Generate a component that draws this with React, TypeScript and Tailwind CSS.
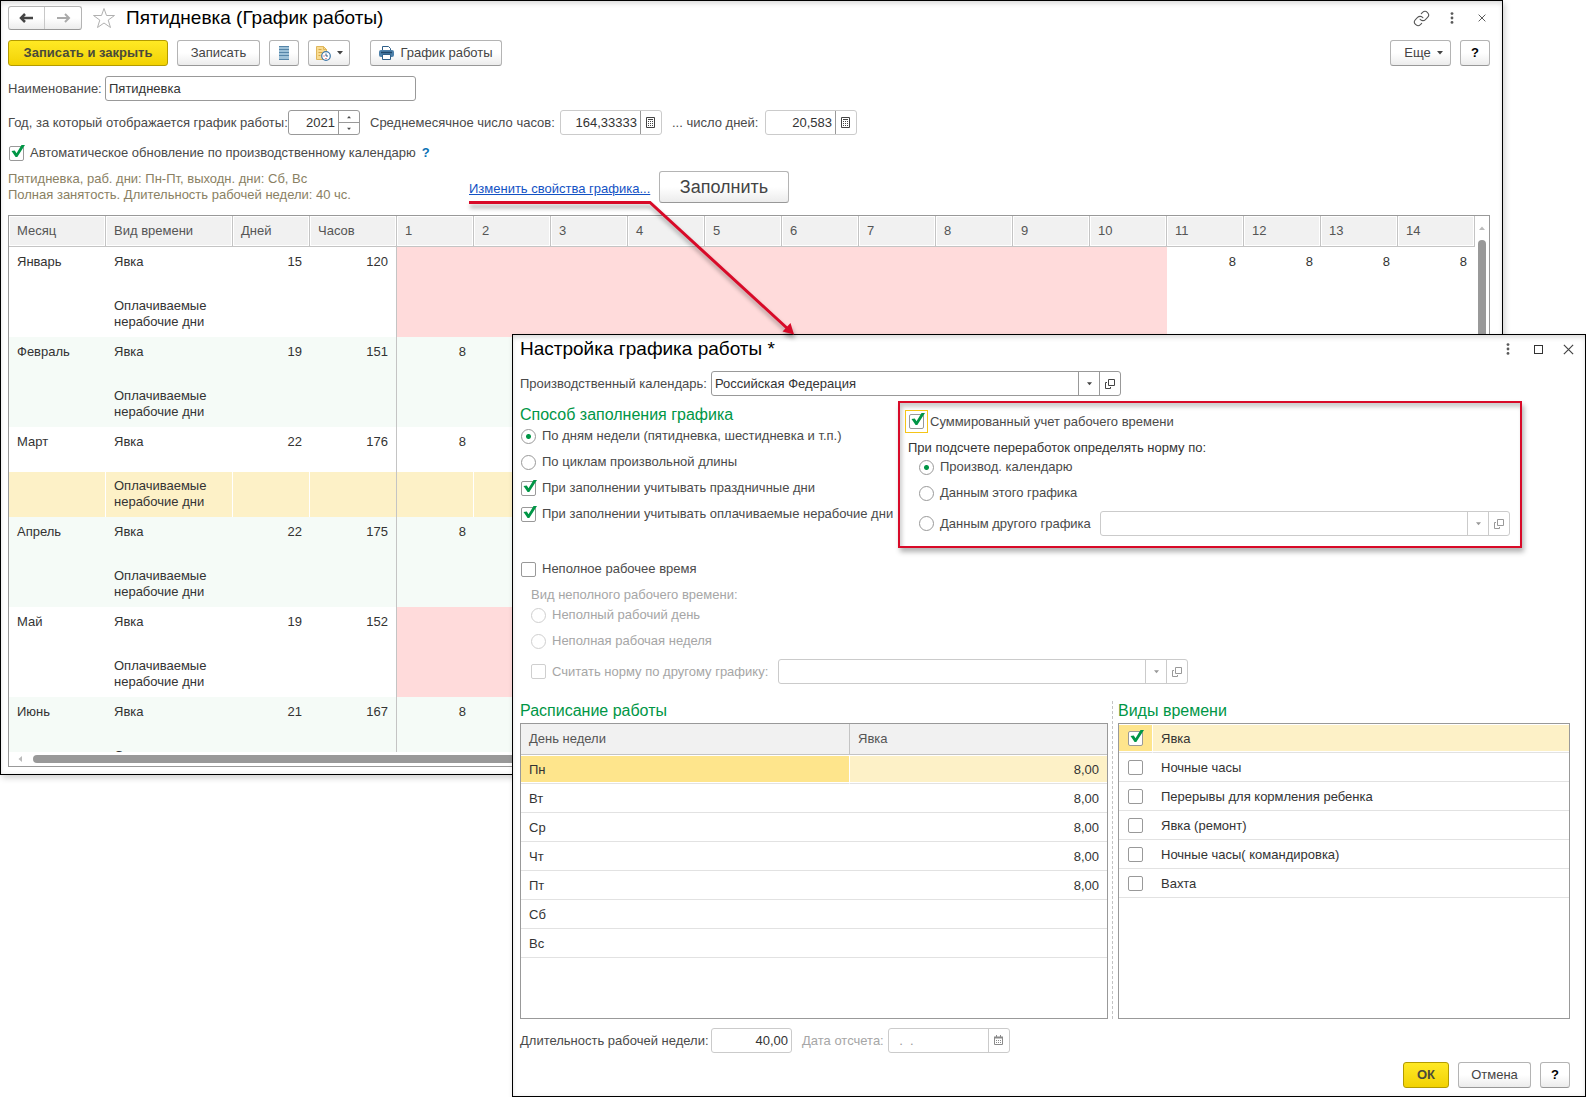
import React, { useState } from 'react';
import clsx from 'clsx';
import { Link } from 'lucide-react';

const days = [1, 2, 3, 4, 5, 6, 7, 8, 9, 10, 11, 12, 13, 14];

const months = [
  { name: 'Январь', days: 15, hours: 120, holidays: 10, values: { 11: 8, 12: 8, 13: 8, 14: 8 } },
  { name: 'Февраль', days: 19, hours: 151, holidays: 0, values: { 1: 8 } },
  { name: 'Март', days: 22, hours: 176, holidays: 0, values: { 1: 8 } },
  { name: 'Апрель', days: 22, hours: 175, holidays: 0, values: { 1: 8 } },
  { name: 'Май', days: 19, hours: 152, holidays: 3, values: {} },
  { name: 'Июнь', days: 21, hours: 167, holidays: 0, values: { 1: 8 } },
] as { name: string; days: number; hours: number; holidays: number; values: Record<number, number> }[];

const week = [
  { day: 'Пн', hours: '8,00' },
  { day: 'Вт', hours: '8,00' },
  { day: 'Ср', hours: '8,00' },
  { day: 'Чт', hours: '8,00' },
  { day: 'Пт', hours: '8,00' },
  { day: 'Сб', hours: '' },
  { day: 'Вс', hours: '' },
];

const timeKinds = [
  'Явка',
  'Ночные часы',
  'Перерывы для кормления ребенка',
  'Явка (ремонт)',
  'Ночные часы( командировка)',
  'Вахта',
];

/* Icons */

const Caret = ({ className }: { className?: string }) => (
  <svg width="6" height="4" viewBox="0 0 6 4" className={clsx('shrink-0', className)}>
    <path d="M0 0h6L3 3.5z" fill="currentColor" />
  </svg>
);

const OpenIcon = () => (
  <svg width="10" height="10" viewBox="0 0 10 10" fill="none" stroke="currentColor">
    <path d="M3.5 0.5h6v6h-6z" />
    <path d="M2 3.5H0.5v6h5V8" />
  </svg>
);

const CalcIcon = () => (
  <svg width="10" height="12" viewBox="0 0 10 12" fill="none" stroke="#444">
    <path d="M0.5 0.5h8v10h-8z" />
    <path d="M2 2.5h5" />
    <path d="M2 4.5h5M2 6.5h5M2 8.5h5" strokeDasharray="1 1" />
  </svg>
);

const CalendarIcon = () => (
  <svg width="10" height="11" viewBox="0 0 10 11" fill="none" stroke="#8a8a8a">
    <path d="M0.5 2.5h8v7h-8z" />
    <path d="M0 2.5h9" strokeWidth="2" />
    <path d="M2.5 0v2M6.5 0v2" />
    <path d="M2 5.5h5M2 7.5h5" strokeDasharray="1 1" />
  </svg>
);

const DotsIcon = () => (
  <svg width="4" height="12" viewBox="0 0 4 12" fill="#5a5a5a">
    <circle cx="2" cy="1.6" r="1.4" />
    <circle cx="2" cy="6" r="1.4" />
    <circle cx="2" cy="10.4" r="1.4" />
  </svg>
);

const CloseIcon = ({ size }: { size: number }) => (
  <svg width={size} height={size} viewBox="0 0 10 10" stroke="#444" strokeWidth="1.1">
    <path d="M0.8 0.8l8.4 8.4M9.2 0.8L0.8 9.2" />
  </svg>
);

const StarIcon = () => (
  <svg width="24" height="22" viewBox="0 0 24 22" fill="none" stroke="#b0b0b0">
    <path d="M12 1.5l2.5 7h8l-6.3 4.600 2.300 7.400L12 16l-6.500 4.500 2.300-7.400L1.500 8.500h8z" />
  </svg>
);

const ArrowLeft = () => (
  <svg width="15" height="10" viewBox="0 0 15 10" fill="none" stroke="#444" strokeWidth="2.5">
    <path d="M2 5H14" />
    <path d="M6 1L2 5l4 4" />
  </svg>
);

const ArrowRight = () => (
  <svg width="15" height="10" viewBox="0 0 15 10" fill="none" stroke="#aaa" strokeWidth="2">
    <path d="M13 5H1" />
    <path d="M9 1l4 4-4 4" />
  </svg>
);

const ListIcon = () => (
  <svg width="10" height="14" viewBox="0 0 10 14">
    <path d="M0 0h10v14H0z" fill="#9dc1d8" />
    <path d="M0 0.5h10M0 3.5h10M0 6.5h10M0 9.5h10M0 13.5h10" stroke="#5585a8" />
  </svg>
);

const ScheduleIcon = () => (
  <svg width="16" height="16" viewBox="0 0 16 16" fill="none">
    <path d="M1.500 1.500h7l3 3v10h-10z" fill="#f9dc91" stroke="#dfb65c" />
    <path d="M8.500 1.500v3h3" stroke="#dfb65c" />
    <path d="M3.500 4.500h3M3.500 7.500h4M3.500 10.500h2" stroke="#d9a846" />
    <circle cx="11" cy="11" r="4.300" fill="#fff" stroke="#3f78a8" strokeWidth="1.200" />
    <path d="M11 8.500V11h2" stroke="#2f5f88" />
    <path d="M8.500 11h1M10.500 13.500h1" stroke="#d2232a" />
  </svg>
);

const PrintIcon = () => (
  <svg width="15" height="14" viewBox="0 0 15 14">
    <path d="M3.500 5V0.500h6l2 2V5" fill="#fff" stroke="#2f5f88" />
    <rect x="0" y="4" width="15" height="7" rx="2" fill="#4c80aa" />
    <path d="M2 6.500h11" stroke="#1f4669" strokeWidth="1.500" />
    <path d="M3.500 8.500h8v5h-8z" fill="#fff" stroke="#2f5f88" />
  </svg>
);

/* Controls */

type ButtonProps = React.ButtonHTMLAttributes<HTMLButtonElement> & { primary?: boolean };

const Button = ({ primary, className, ...props }: ButtonProps) => (
  <button
    type="button"
    className={clsx(
      'flex shrink-0 items-center justify-center whitespace-nowrap rounded-[3px] border',
      primary
        ? 'border-[#b39b00] bg-linear-to-b from-[#ffe923] to-[#f2d200] font-bold text-[#4a4a3a]'
        : 'border-[#b4b4b4] border-b-[#989898] bg-linear-to-b from-white from-50% to-[#ececec] text-[#444]',
      className,
    )}
    {...props}
  />
);

type CheckProps = { label?: string; title?: string; defaultChecked?: boolean; disabled?: boolean; focused?: boolean };

const Checkbox = ({ label, title, defaultChecked = false, disabled, focused }: CheckProps) => {
  const [checked, setChecked] = useState(defaultChecked);
  return (
    <label className={clsx('flex items-center whitespace-nowrap', focused ? 'gap-0.5' : 'gap-1.5', disabled ? 'text-[#a6a6a6]' : 'text-[#4a4a4a]')}>
      <span className={clsx('relative flex', focused && 'border border-[#f5c518] p-[3px]')}>
        <input
          type="checkbox"
          aria-label={title}
          checked={checked}
          disabled={disabled}
          onChange={(e) => setChecked(e.target.checked)}
          className={clsx('size-[15px] appearance-none rounded-[2px] border bg-white', disabled ? 'border-[#cfcfcf]' : 'border-[#999]')}
        />
        {checked && (
          <svg
            width="16"
            height="15"
            viewBox="0 0 16 15"
            className={clsx('pointer-events-none absolute', focused ? 'left-[3px] top-0.5' : 'left-0 -top-px')}
          >
            <path d="M2.500 6L5.800 5.600l1.700 2.700L12.500 0H16L8.300 12H6.600z" fill="#009646" />
          </svg>
        )}
      </span>
      {label}
    </label>
  );
};

type RadioProps = { label: string; name: string; defaultChecked?: boolean; disabled?: boolean };

const Radio = ({ label, name, defaultChecked, disabled }: RadioProps) => (
  <label className={clsx('flex items-center gap-1.5 whitespace-nowrap', disabled ? 'text-[#a6a6a6]' : 'text-[#4a4a4a]')}>
    <input
      type="radio"
      name={name}
      defaultChecked={defaultChecked}
      disabled={disabled}
      className={clsx(
        'size-[15px] appearance-none rounded-full border bg-white checked:bg-[radial-gradient(circle,#009646_2px,transparent_3px)]',
        disabled ? 'border-[#cfcfcf]' : 'border-[#999]',
      )}
    />
    {label}
  </label>
);

type FieldProps = {
  id: string;
  value?: string;
  className?: string;
  align?: 'left' | 'right';
  light?: boolean;
  disabled?: boolean;
  children?: React.ReactNode;
};

const Field = ({ id, value = '', className, align = 'left', light, disabled, children }: FieldProps) => (
  <div className={clsx('flex h-[25px] rounded-[3px] border bg-white', light ? 'border-[#cbcbcb]' : 'border-[#999]', className)}>
    <input
      id={id}
      type="text"
      defaultValue={value}
      disabled={disabled}
      className={clsx('min-w-0 flex-1 px-[3px] outline-none', disabled ? 'text-[#999]' : 'text-[#333]', align === 'right' && 'text-right')}
    />
    {children}
  </div>
);

const SelectButtons = ({ light }: { light?: boolean }) => (
  <>
    {['Выбрать', 'Открыть'].map((title) => (
      <button
        key={title}
        type="button"
        aria-label={title}
        disabled={light}
        className={clsx('flex w-[21px] items-center justify-center border-l', light ? 'border-[#cbcbcb] text-[#999]' : 'border-[#999] text-[#444]')}
      >
        {title === 'Выбрать' ? <Caret className="w-[5px]" /> : <OpenIcon />}
      </button>
    ))}
  </>
);

const windowFrame =
  'border border-black bg-white shadow-[2px_3px_6px_rgba(0,0,0,0.18),inset_0_5px_5px_-2px_rgba(0,0,0,0.1),inset_0_0_5px_rgba(0,0,0,0.08)]';

/* Yearly table of the schedule */

const ScheduleTable = () => (
  <div className="border border-[#999] bg-white">
    <div className="flex">
      <div className="h-[536px] flex-1 overflow-hidden">
        <table className="w-full table-fixed border-separate border-spacing-0 text-left">
          <colgroup>
            <col className="w-[97px]" />
            <col className="w-[127px]" />
            <col className="w-[77px]" />
            <col className="w-[87px]" />
            {days.map((d) => (
              <col key={d} />
            ))}
          </colgroup>
          <thead>
            <tr className="h-[31px] text-[#555]">
              {['Месяц', 'Вид времени', 'Дней', 'Часов', ...days].map((title) => (
                <th
                  key={title}
                  className="border-r border-b border-[#c4c4c4] bg-[#f1f1f1] px-2 font-normal shadow-[inset_0_0_0_1px_white]"
                >
                  {title}
                </th>
              ))}
            </tr>
          </thead>
          <tbody className="text-[#333]">
            {months.map((m, i) => {
              const stripe = i % 2 ? 'bg-[#f5fbf7]' : 'bg-white';
              const selected = m.name === 'Март';
              const second = selected ? 'bg-[#fdf1c7] border-r border-r-white' : stripe;
              return (
                <React.Fragment key={m.name}>
                  <tr className={clsx('h-[45px] align-top', stripe)}>
                    <td className="px-2 pt-[7px]">{m.name}</td>
                    <td className="px-2 pt-[7px]">Явка</td>
                    <td className="px-2 pt-[7px] text-right">{m.days}</td>
                    <td className="border-r border-[#c4c4c4] px-2 pt-[7px] text-right">{m.hours}</td>
                    {days.map((d) => (
                      <td key={d} className={clsx('px-2 pt-[7px] text-right', d <= m.holidays && 'bg-[#ffdbdb]')}>
                        {m.values[d]}
                      </td>
                    ))}
                  </tr>
                  <tr className="h-[45px] align-top">
                    <td className={second} />
                    <td className={clsx('px-2 pt-1.5', second)}>Оплачиваемые нерабочие дни</td>
                    <td className={second} />
                    <td className={clsx('border-r border-r-[#c4c4c4]', selected ? 'bg-[#fdf1c7]' : stripe)} />
                    {days.map((d) => (
                      <td key={d} className={d <= m.holidays ? 'bg-[#ffdbdb]' : second} />
                    ))}
                  </tr>
                </React.Fragment>
              );
            })}
          </tbody>
        </table>
      </div>
      {/* Vertical scrollbar */}
      <div className="flex w-[14px] flex-col items-center gap-2.5 pt-2.5">
        <Caret className="rotate-180 text-[#bbb]" />
        <div className="w-2 flex-1 rounded-full bg-[#999]" />
      </div>
    </div>
    {/* Horizontal scrollbar */}
    <div className="flex h-[14px] items-center gap-2.5 pr-10 pl-2">
      <Caret className="rotate-90 text-[#bbb]" />
      <div className="h-2 flex-1 rounded-full bg-[#999]" />
    </div>
  </div>
);

const MainWindow = () => (
  <main className={clsx('mr-[83px] pt-[5px] pr-3 pb-[7px] pl-[7px]', windowFrame)}>
    <header className="flex items-center">
      <div className="flex h-6 rounded-[3px] border border-[#b4b4b4] border-b-[#989898] bg-linear-to-b from-white from-50% to-[#ececec]">
        <button type="button" aria-label="Назад" className="flex w-9 items-center justify-center border-r border-[#c8c8c8]">
          <ArrowLeft />
        </button>
        <button type="button" aria-label="Вперед" className="flex w-9 items-center justify-center">
          <ArrowRight />
        </button>
      </div>
      <button type="button" aria-label="В избранное" className="ml-2.5">
        <StarIcon />
      </button>
      <h1 className="ml-2.5 flex-1 text-[19px] leading-6 text-black">Пятидневка (График работы)</h1>
      <div className="flex items-center gap-5 pr-1">
        <button type="button" aria-label="Ссылка">
          <Link size={17} strokeWidth={1.5} color="#555" />
        </button>
        <button type="button" aria-label="Меню">
          <DotsIcon />
        </button>
        <button type="button" aria-label="Закрыть" className="ml-1">
          <CloseIcon size={8} />
        </button>
      </div>
    </header>

    <div className="mt-2.5 flex h-[26px] gap-[9px]">
      <Button primary className="w-[160px]">Записать и закрыть</Button>
      <Button className="w-[83px]">Записать</Button>
      <Button aria-label="Список" className="w-[30px]">
        <ListIcon />
      </Button>
      <Button aria-label="Расписание" className="w-[42px] gap-1.5">
        <ScheduleIcon />
        <Caret />
      </Button>
      <Button className="ml-[11px] w-[132px] gap-1.5">
        <PrintIcon />
        График работы
      </Button>
      <Button className="ml-auto w-[61px] gap-1.5 pl-1.5">
        Еще
        <Caret />
      </Button>
      <Button className="w-[30px] font-bold text-black">?</Button>
    </div>

    <div className="mt-2.5 flex items-center text-[#4a4a4a]">
      <label htmlFor="name" className="w-[97px]">Наименование:</label>
      <Field id="name" value="Пятидневка" className="w-[311px]" />
    </div>

    <div className="mt-[9px] flex items-center whitespace-nowrap text-[#4a4a4a]">
      <label htmlFor="year" className="w-[280px]">Год, за который отображается график работы:</label>
      <Field id="year" value="2021" align="right" className="w-[72px]">
        <div className="flex w-[21px] flex-col border-l border-[#999]">
          <button type="button" aria-label="Больше" className="flex flex-1 items-center justify-center border-b border-[#999]">
            <Caret className="w-1 rotate-180" />
          </button>
          <button type="button" aria-label="Меньше" className="flex flex-1 items-center justify-center">
            <Caret className="w-1" />
          </button>
        </div>
      </Field>
      <label htmlFor="avgHours" className="ml-2.5 w-[190px]">Среднемесячное число часов:</label>
      <Field id="avgHours" value="164,33333" align="right" light className="w-[102px]">
        <button type="button" aria-label="Калькулятор" className="flex w-[21px] items-center justify-center border-l border-[#999]">
          <CalcIcon />
        </button>
      </Field>
      <label htmlFor="avgDays" className="ml-2.5 w-[93px]">... число дней:</label>
      <Field id="avgDays" value="20,583" align="right" light className="w-[92px]">
        <button type="button" aria-label="Калькулятор" className="flex w-[21px] items-center justify-center border-l border-[#999]">
          <CalcIcon />
        </button>
      </Field>
    </div>

    <div className="mt-2.5 flex h-4 items-center gap-1.5 pl-px">
      <Checkbox label="Автоматическое обновление по производственному календарю" defaultChecked />
      <a href="#help" className="font-bold text-[#0b72b5]">?</a>
    </div>

    <div className="mt-[9px] flex items-center">
      <p className="w-[461px] pt-px text-[#8a7f63]">
        Пятидневка, раб. дни: Пн-Пт, выходн. дни: Сб, Вс
        <br />
        Полная занятость. Длительность рабочей недели: 40 чс.
      </p>
      <a href="#settings" className="w-[190px] pt-1 text-[#1352c4] underline">Изменить свойства графика...</a>
      <Button className="h-8 w-[130px] text-[18px]">Заполнить</Button>
    </div>

    <div className="mt-3">
      <ScheduleTable />
    </div>
  </main>
);

const SettingsDialog = () => (
  <section
    role="dialog"
    aria-label="Настройка графика работы"
    className={clsx('absolute top-[334px] right-0 left-[512px] pt-0.5 pr-[15px] pb-2 pl-[7px]', windowFrame)}
  >
    <header className="flex items-center">
      <h2 className="flex-1 text-[19px] leading-6 text-black">Настройка графика работы *</h2>
      <div className="flex items-center gap-5">
        <button type="button" aria-label="Меню" className="mr-1">
          <DotsIcon />
        </button>
        <button type="button" aria-label="Развернуть" className="size-[9px] border border-[#333]" />
        <button type="button" aria-label="Закрыть" className="-mr-1">
          <CloseIcon size={11} />
        </button>
      </div>
    </header>

    <div className="mt-2.5 flex items-center whitespace-nowrap text-[#4a4a4a]">
      <label htmlFor="calendar" className="w-[191px]">Производственный календарь:</label>
      <Field id="calendar" value="Российская Федерация" className="w-[410px]">
        <SelectButtons />
      </Field>
    </div>

    <div className="mt-[5px] flex items-start">
      <div className="w-[378px] pt-1">
        <h3 className="text-[16px] leading-5 text-[#009646]">Способ заполнения графика</h3>
        <div className="mt-[3px] flex flex-col gap-2.5 pl-px">
          <Radio name="fill" label="По дням недели (пятидневка, шестидневка и т.п.)" defaultChecked />
          <Radio name="fill" label="По циклам произвольной длины" />
          <Checkbox label="При заполнении учитывать праздничные дни" defaultChecked />
          <Checkbox label="При заполнении учитывать оплачиваемые нерабочие дни" defaultChecked />
        </div>
      </div>

      {/* Highlighted block */}
      <div className="h-[147px] w-[624px] border-2 border-[#d80a28] pt-[7px] pl-[5px] shadow-[2px_4px_5px_rgba(0,0,0,0.3),inset_2px_4px_4px_rgba(0,0,0,0.2)]">
        <Checkbox label="Суммированный учет рабочего времени" defaultChecked focused />
        <p className="mt-[7px] pl-[3px] text-[#333]">При подсчете переработок определять норму по:</p>
        <div className="mt-[3px] flex flex-col gap-2.5 pl-3.5">
          <Radio name="norm" label="Производ. календарю" defaultChecked />
          <Radio name="norm" label="Данным этого графика" />
          <div className="flex items-center justify-between pr-2.5">
            <Radio name="norm" label="Данным другого графика" />
            <Field id="otherSchedule" light disabled className="w-[410px]">
              <SelectButtons light />
            </Field>
          </div>
        </div>
      </div>
    </div>

    <div className="mt-[13px] pl-px">
      <Checkbox label="Неполное рабочее время" />
      <div className="mt-2.5 flex flex-col pl-2.5 text-[#a6a6a6]">
        <p>Вид неполного рабочего времени:</p>
        <div className="mt-1 flex flex-col gap-2.5">
          <Radio name="part" label="Неполный рабочий день" disabled />
          <Radio name="part" label="Неполная рабочая неделя" disabled />
          <div className="flex items-center">
            <div className="w-[247px]">
              <Checkbox label="Считать норму по другому графику:" disabled />
            </div>
            <Field id="normSchedule" light disabled className="w-[410px]">
              <SelectButtons light />
            </Field>
          </div>
        </div>
      </div>
    </div>

    <div className="mt-[17px] flex">
      <div className="flex w-[588px] flex-col">
        <h3 className="text-[16px] leading-5 text-[#009646]">Расписание работы</h3>
        <div className="mt-0.5 h-[296px] border border-[#999]">
          <table className="w-full table-fixed border-separate border-spacing-0 text-left text-[#333]">
            <thead>
              <tr className="h-[31px] text-[#555]">
                <th className="w-[329px] border-r border-b border-[#c4c4c4] bg-[#f1f1f1] px-2 font-normal">День недели</th>
                <th className="border-b border-[#c4c4c4] bg-[#f1f1f1] px-2 font-normal">Явка</th>
              </tr>
            </thead>
            <tbody>
              {week.map((row, i) => (
                <tr key={row.day} className="h-[29px]">
                  <td className={clsx('border-b border-[#e2e2e2] px-2 pt-px', i === 0 && 'border-r border-r-white bg-[#fee58c] shadow-[inset_0_1px_0_white,inset_0_-1px_0_white]')}>
                    {row.day}
                  </td>
                  <td className={clsx('border-b border-[#e2e2e2] px-2 pt-px text-right', i === 0 && 'bg-[#fdf1c7] shadow-[inset_0_1px_0_white,inset_0_-1px_0_white]')}>
                    {row.hours}
                  </td>
                </tr>
              ))}
            </tbody>
          </table>
        </div>
      </div>

      <div className="mr-[5px] ml-1 w-px border-l border-dashed border-[#c4c4c4]" />

      <div className="flex flex-1 flex-col">
        <h3 className="text-[16px] leading-5 text-[#009646]">Виды времени</h3>
        <div className="mt-0.5 h-[296px] border border-[#999]">
          <table className="w-full table-fixed border-separate border-spacing-0 text-left text-[#333]">
            <tbody>
              {timeKinds.map((kind, i) => (
                <tr key={kind} className="h-[29px]">
                  <td className={clsx('w-[34px] border-b border-[#e2e2e2] pl-[9px]', i === 0 && 'border-r border-r-white bg-[#fee58c] shadow-[inset_0_1px_0_white,inset_0_-1px_0_white]')}>
                    <Checkbox title={kind} defaultChecked={i === 0} />
                  </td>
                  <td className={clsx('border-b border-[#e2e2e2] px-2 pt-px', i === 0 && 'bg-[#fdf1c7] shadow-[inset_0_1px_0_white,inset_0_-1px_0_white]')}>{kind}</td>
                </tr>
              ))}
            </tbody>
          </table>
        </div>
      </div>
    </div>

    <div className="mt-[9px] flex items-center whitespace-nowrap text-[#4a4a4a]">
      <label htmlFor="weekLength" className="w-[191px]">Длительность рабочей недели:</label>
      <Field id="weekLength" value="40,00" align="right" light className="w-[81px]" />
      <label htmlFor="startDate" className="ml-2.5 w-[86px] text-[#a6a6a6]">Дата отсчета:</label>
      <Field id="startDate" value="  .  ." light disabled className="w-[122px]">
        <button type="button" aria-label="Календарь" disabled className="flex w-[21px] items-center justify-center border-l border-[#cbcbcb]">
          <CalendarIcon />
        </button>
      </Field>
    </div>

    <footer className="mt-[9px] flex h-[26px] justify-end gap-[9px]">
      <Button primary className="w-[46px]">ОК</Button>
      <Button className="w-[73px]">Отмена</Button>
      <Button className="w-[30px] font-bold text-black">?</Button>
    </footer>
  </section>
);

/* Red underline and arrow from the link to the dialog */
const Pointer = () => (
  <svg
    width="340"
    height="150"
    viewBox="0 0 340 150"
    className="pointer-events-none absolute top-[196px] left-[464px] drop-shadow-[1px_4px_2px_rgba(0,0,0,0.35)]"
  >
    <path d="M5 6.500H186L324 133" fill="none" stroke="#d80a28" strokeWidth="3" />
    <path d="M330 138.500l-11.500-3 8-8.500z" fill="#d80a28" />
  </svg>
);

export default function App() {
  return (
    <div className="relative min-h-[1097px] bg-white font-['Liberation_Sans',Arial,sans-serif] text-[13px] leading-4">
      <MainWindow />
      <SettingsDialog />
      <Pointer />
    </div>
  );
}
